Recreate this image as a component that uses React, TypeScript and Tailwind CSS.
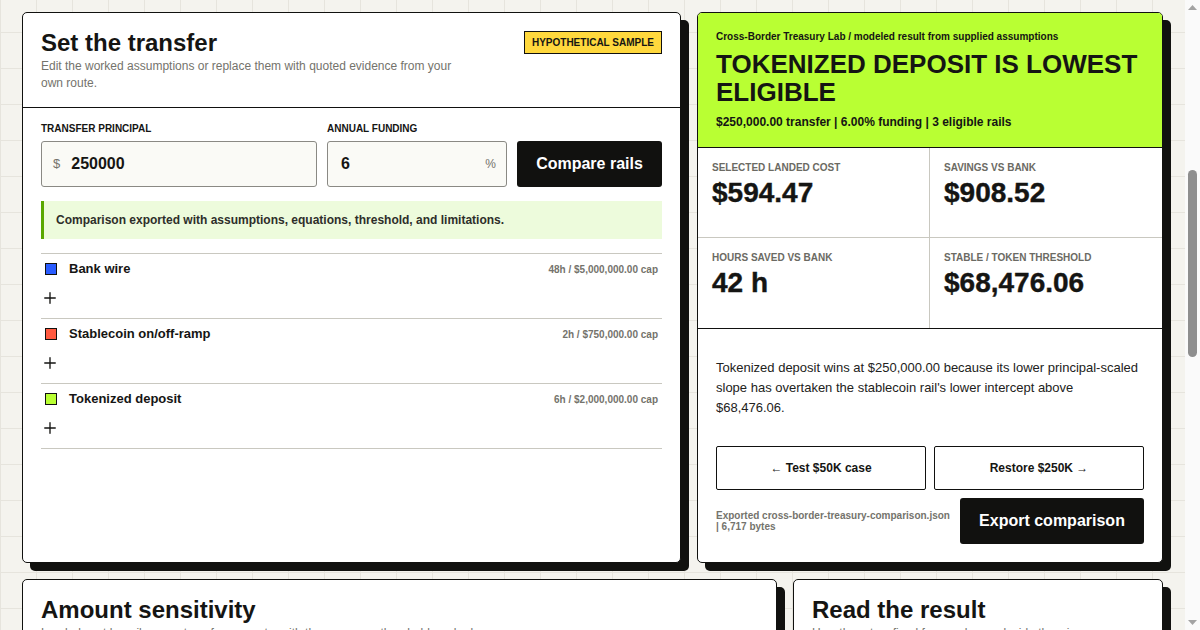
import { Plus } from 'lucide-react';

const rails = [
  { name: 'Bank wire', color: 'bg-[#2a5cff]', meta: '48h / $5,000,000.00 cap' },
  { name: 'Stablecoin on/off-ramp', color: 'bg-[#ff5a40]', meta: '2h / $750,000.00 cap' },
  { name: 'Tokenized deposit', color: 'bg-[#b9ff33]', meta: '6h / $2,000,000.00 cap' },
];

const metrics = [
  { label: 'Selected landed cost', value: '$594.47' },
  { label: 'Savings vs bank', value: '$908.52' },
  { label: 'Hours saved vs bank', value: '42 h' },
  { label: 'Stable / token threshold', value: '$68,476.06' },
];

// classic scrollbar look, the page itself scrolls in the left pane
const Scrollbar = () => (
  <div className="w-[15px] shrink-0 bg-[#fafafa] flex flex-col items-center">
    <div className="h-[15px] flex items-center justify-center">
      <svg width="9" height="5" viewBox="0 0 9 5">
        <path d="M4.5 0L9 5H0z" fill="#a3a3a3" />
      </svg>
    </div>
    <div className="flex-1 pt-[155px]">
      <div className="w-[9px] h-[187px] rounded-full bg-[#8e8e8e]" />
    </div>
    <div className="h-[15px] flex items-center justify-center">
      <svg width="9" height="5" viewBox="0 0 9 5">
        <path d="M0 0h9L4.5 5z" fill="#a3a3a3" />
      </svg>
    </div>
  </div>
);

export default function App() {
  return (
    <div className="h-screen flex font-['Liberation_Sans',Arial,sans-serif] text-[#151513]">
      <div className="flex-1 min-w-0 overflow-y-auto [scrollbar-width:none] bg-[#f4f3ee] bg-[linear-gradient(to_right,#e6e4dd_1px,transparent_1px),linear-gradient(to_bottom,#e6e4dd_1px,transparent_1px)] bg-[size:36px_36px] bg-[position:0_-4px]">
        <main className="px-[22px] pt-[12px] pb-[40px] flex flex-col gap-[16px]">
          <div className="grid grid-cols-[659fr_466fr] gap-[16px]">
            {/* Inputs */}
            <section className="bg-white border border-[#11110f] rounded-[5px] shadow-[8px_8px_0_#11110f] flex flex-col">
              <header className="flex justify-between items-start gap-4 px-[18px] pt-[16px] pb-[15px] border-b border-[#11110f]">
                <div>
                  <h2 className="text-[24px] leading-[28px] font-bold">Set the transfer</h2>
                  <p className="mt-[1px] max-w-[420px] text-[12px] leading-[17px] text-[#74736c]">
                    Edit the worked assumptions or replace them with quoted evidence from your own route.
                  </p>
                </div>
                <span className="mt-[2px] border border-[#11110f] bg-[#ffd83d] px-[7px] py-[4px] text-[10px] leading-[13px] font-bold uppercase whitespace-nowrap">
                  Hypothetical sample
                </span>
              </header>

              <div className="px-[18px] pt-[15px]">
                <div className="grid grid-cols-[1fr_180px_145px] gap-[10px] items-end">
                  <label className="flex flex-col gap-[6px]">
                    <span className="text-[10px] leading-[12px] font-bold uppercase">Transfer principal</span>
                    <div className="h-[46px] flex items-center gap-[11px] px-[11px] border border-[#8a8984] rounded-[3px] bg-[#fafaf6]">
                      <span className="text-[13px] text-[#74736c]">$</span>
                      <span className="text-[16px] font-bold">250000</span>
                    </div>
                  </label>
                  <label className="flex flex-col gap-[6px]">
                    <span className="text-[10px] leading-[12px] font-bold uppercase">Annual funding</span>
                    <div className="h-[46px] flex items-center justify-between pl-[13px] pr-[10px] border border-[#8a8984] rounded-[3px] bg-[#fafaf6]">
                      <span className="text-[16px] font-bold">6</span>
                      <span className="text-[12px] text-[#74736c]">%</span>
                    </div>
                  </label>
                  <button className="h-[46px] rounded-[3px] bg-[#11110f] text-white text-[16px] font-bold">
                    Compare rails
                  </button>
                </div>

                <div className="mt-[14px] h-[38px] flex items-center pl-[12px] border-l-[3px] border-[#5aa800] bg-[#edfbdc] text-[12px] font-bold text-[#2e2e2a]">
                  Comparison exported with assumptions, equations, threshold, and limitations.
                </div>

                <ul className="mt-[14px] border-t border-[#c9c8c0]">
                  {rails.map((r) => (
                    <li key={r.name} className="border-b border-[#c9c8c0] pt-[7px] pb-[11px] px-[4px]">
                      <div className="flex items-center justify-between h-[16px]">
                        <div className="flex items-center gap-[12px]">
                          <span className={`w-[12px] h-[12px] border border-[#11110f] ${r.color}`} />
                          <span className="text-[13px] font-bold">{r.name}</span>
                        </div>
                        <span className="text-[10px] font-bold text-[#74736c]">{r.meta}</span>
                      </div>
                      <div className="mt-[12px] -ml-[4px] h-[18px] flex items-center">
                        <Plus size={18} strokeWidth={1.8} />
                      </div>
                    </li>
                  ))}
                </ul>
              </div>
            </section>

            {/* Result */}
            <section className="bg-white border border-[#11110f] rounded-[5px] shadow-[8px_8px_0_#11110f] overflow-hidden flex flex-col">
              <header className="bg-[#b9ff33] border-b border-[#11110f] px-[18px] pt-[18px] pb-[17px]">
                <p className="text-[10px] leading-[12px] font-bold">Cross-Border Treasury Lab / modeled result from supplied assumptions</p>
                <h1 className="mt-[7px] text-[26px] leading-[28px] font-bold uppercase">Tokenized deposit is lowest eligible</h1>
                <p className="mt-[8px] text-[12px] leading-[16px] font-bold">$250,000.00 transfer | 6.00% funding | 3 eligible rails</p>
              </header>

              <div className="grid grid-cols-2 border-b border-[#11110f]">
                {metrics.map((m, i) => (
                  <div
                    key={m.label}
                    className={`h-[90px] px-[14px] pt-[14px] ${i % 2 === 0 ? 'border-r' : ''} ${i < 2 ? 'border-b' : ''} border-[#c9c8c0]`}
                  >
                    <p className="text-[10px] leading-[12px] font-bold uppercase text-[#6b6a63]">{m.label}</p>
                    <p className="mt-[3px] text-[28px] leading-[32px] font-black [-webkit-text-stroke:0.4px_#151513]">{m.value}</p>
                  </div>
                ))}
              </div>

              <div className="px-[18px] pt-[29px] pb-[18px]">
                <p className="text-[13px] leading-[20px] text-[#222220]">
                  Tokenized deposit wins at $250,000.00 because its lower principal-scaled slope has overtaken the stablecoin rail's lower intercept above $68,476.06.
                </p>
                <div className="mt-[28px] grid grid-cols-2 gap-[8px]">
                  <button className="h-[44px] border border-[#11110f] rounded-[2px] bg-white text-[12px] font-bold">← Test $50K case</button>
                  <button className="h-[44px] border border-[#11110f] rounded-[2px] bg-white text-[12px] font-bold">Restore $250K →</button>
                </div>
                <div className="mt-[8px] flex items-center justify-between gap-[10px]">
                  <p className="text-[10px] leading-[11px] font-bold text-[#74736c]">
                    Exported cross-border-treasury-comparison.json | 6,717 bytes
                  </p>
                  <button className="shrink-0 w-[184px] h-[46px] rounded-[3px] bg-[#11110f] text-white text-[16px] font-bold">
                    Export comparison
                  </button>
                </div>
              </div>
            </section>
          </div>

          <div className="grid grid-cols-[755fr_370fr] gap-[16px]">
            <section className="bg-white border border-[#11110f] rounded-[5px] shadow-[8px_8px_0_#11110f] min-h-[720px]">
              <header className="px-[18px] pt-[16px] pb-[15px] border-b border-[#11110f]">
                <h2 className="text-[24px] leading-[28px] font-bold">Amount sensitivity</h2>
                <p className="mt-[1px] text-[12px] leading-[17px] text-[#74736c]">
                  Landed cost by rail across transfer amounts, with the crossover threshold marked.
                </p>
              </header>
            </section>
            <section className="bg-white border border-[#11110f] rounded-[5px] shadow-[8px_8px_0_#11110f] min-h-[720px]">
              <header className="px-[18px] pt-[16px] pb-[15px] border-b border-[#11110f]">
                <h2 className="text-[24px] leading-[28px] font-bold">Read the result</h2>
                <p className="mt-[1px] text-[12px] leading-[17px] text-[#74736c]">
                  How the rates, fixed fees and caps decide the winner.
                </p>
              </header>
            </section>
          </div>
        </main>
      </div>
      <Scrollbar />
    </div>
  );
}
